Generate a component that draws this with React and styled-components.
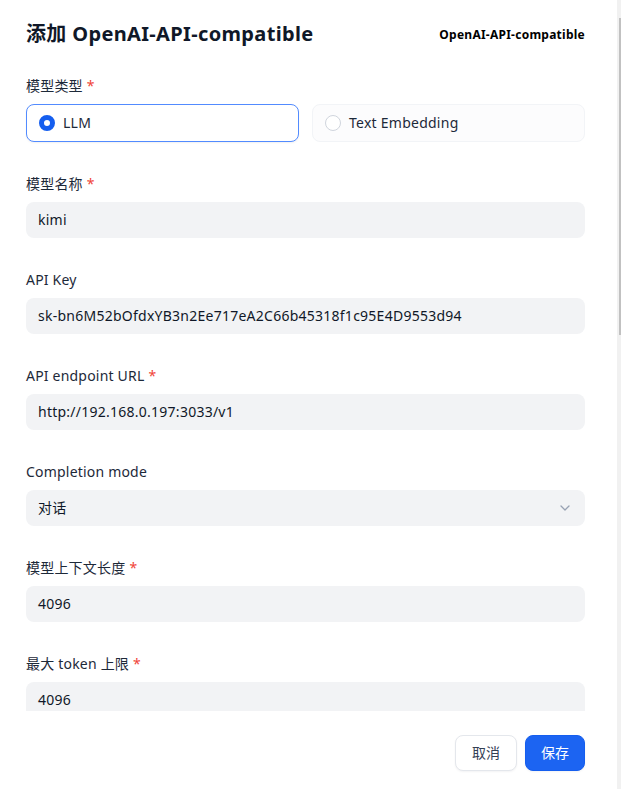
import React from "react";
import styled, { createGlobalStyle } from "styled-components";

const Global = createGlobalStyle`
  html, body { margin: 0; padding: 0; background: #ffffff; }
  body {
    font-family: "Noto Sans", "Noto Sans CJK SC", sans-serif;
    color: #101828;
    -webkit-font-smoothing: antialiased;
  }
  * { box-sizing: border-box; }
`;

const Dialog = styled.div`
  position: relative;
  width: 621px;
  height: 789px;
  display: flex;
  flex-direction: column;
  overflow: hidden;
  background: #fff;
`;

const Header = styled.div`
  display: flex;
  align-items: center;
  justify-content: space-between;
  padding: 20px 36px 0 26px;
  height: 48px;
`;

const Title = styled.h1`
  margin: 0;
  font-size: 20px;
  line-height: 28px;
  font-weight: 700;
  letter-spacing: 0.35px;
  color: #101828;
`;

const Brand = styled.div`
  font-size: 12px;
  font-weight: 700;
  color: #000;
  letter-spacing: 0.25px;
`;

const Body = styled.div`
  flex: 1;
  overflow: hidden;
  padding: 28px 36px 0 26px;
  display: flex;
  flex-direction: column;
  gap: 32px;
`;

const Field = styled.div`
  display: flex;
  flex-direction: column;
  gap: 8px;
`;

const Label = styled.div`
  font-size: 14px;
  line-height: 20px;
  letter-spacing: 0.2px;
  color: #1d2939;
`;

const Req = styled.span`
  color: #f04438;
  margin-left: 4px;
`;

const RadioRow = styled.div`
  display: grid;
  grid-template-columns: 1fr 1fr;
  gap: 13px;
`;

const RadioCard = styled.div`
  height: 38px;
  border-radius: 8px;
  display: flex;
  align-items: center;
  gap: 8px;
  padding: 0 12px 2px;
  font-size: 14px;
  letter-spacing: 0.25px;
  color: #1d2939;
  border: 1px solid ${(p) => (p.$active ? "#528bff" : "#f2f4f7")};
  background: ${(p) => (p.$active ? "#ffffff" : "#fcfcfd")};
  box-shadow: ${(p) => (p.$active ? "0 1px 2px rgba(16,24,40,0.06)" : "none")};
`;

const Dot = styled.span`
  width: 16px;
  height: 16px;
  margin-top: 2px;
  border-radius: 50%;
  flex-shrink: 0;
  border: ${(p) => (p.$active ? "5px solid #155eef" : "1px solid #d0d5dd")};
  background: #fff;
`;

const Input = styled.div`
  height: 36px;
  border-radius: 8px;
  background: #f2f3f5;
  display: flex;
  align-items: center;
  justify-content: space-between;
  padding: 0 12px 2px;
  font-size: 14px;
  letter-spacing: 0.25px;
  color: #101828;
`;

const Footer = styled.div`
  display: flex;
  justify-content: flex-end;
  gap: 8px;
  padding: 24px 36px 18px 26px;
`;

const Button = styled.button`
  height: 36px;
  padding: 0 ${(p) => (p.$primary ? "15px" : "16px")} 2px;
  border-radius: 8px;
  font-family: inherit;
  font-size: 14px;
  border: 1px solid ${(p) => (p.$primary ? "#155eef" : "#e4e7ec")};
  background: ${(p) => (p.$primary ? "#1c64f2" : "#ffffff")};
  color: ${(p) => (p.$primary ? "#ffffff" : "#344054")};
  box-shadow: 0 1px 2px rgba(16,24,40,0.05);
`;

const Track = styled.div`
  position: absolute;
  top: 0;
  right: 0;
  width: 4px;
  height: 100%;
  background: #f1f1f1;
`;

const Thumb = styled.div`
  position: absolute;
  top: 18px;
  right: 0;
  width: 2px;
  height: 317px;
  background: #c1c1c1;
`;

const SelectIcon = styled.svg`
  margin-top: 2px;
  flex-shrink: 0;
`;

const Chevron = () => (
  <SelectIcon width="16" height="16" viewBox="0 0 16 16" fill="none">
    <path d="M4 6l4 4 4-4" stroke="#98a2b3" strokeWidth="1.3" strokeLinecap="round" strokeLinejoin="round" />
  </SelectIcon>
);

const fields = [
  { label: "模型名称", req: true, value: "kimi" },
  { label: "API Key", value: "sk-bn6M52bOfdxYB3n2Ee717eA2C66b45318f1c95E4D9553d94" },
  { label: "API endpoint URL", req: true, value: "http://192.168.0.197:3033/v1" },
  { label: "Completion mode", value: "对话", select: true },
  { label: "模型上下文长度", req: true, value: "4096" },
  { label: "最大 token 上限", req: true, value: "4096" },
];

export default function App() {
  return (
    <>
      <Global />
      <Dialog>
        <Header>
          <Title>添加 OpenAI-API-compatible</Title>
          <Brand>OpenAI-API-compatible</Brand>
        </Header>
        <Body>
          <Field>
            <Label>
              模型类型<Req>*</Req>
            </Label>
            <RadioRow>
              <RadioCard $active>
                <Dot $active />
                LLM
              </RadioCard>
              <RadioCard>
                <Dot />
                Text Embedding
              </RadioCard>
            </RadioRow>
          </Field>
          {fields.map((f) => (
            <Field key={f.label}>
              <Label>
                {f.label}
                {f.req && <Req>*</Req>}
              </Label>
              <Input>
                <span>{f.value}</span>
                {f.select && <Chevron />}
              </Input>
            </Field>
          ))}
        </Body>
        <Footer>
          <Button>取消</Button>
          <Button $primary>保存</Button>
        </Footer>
        <Track>
          <Thumb />
        </Track>
      </Dialog>
    </>
  );
}
